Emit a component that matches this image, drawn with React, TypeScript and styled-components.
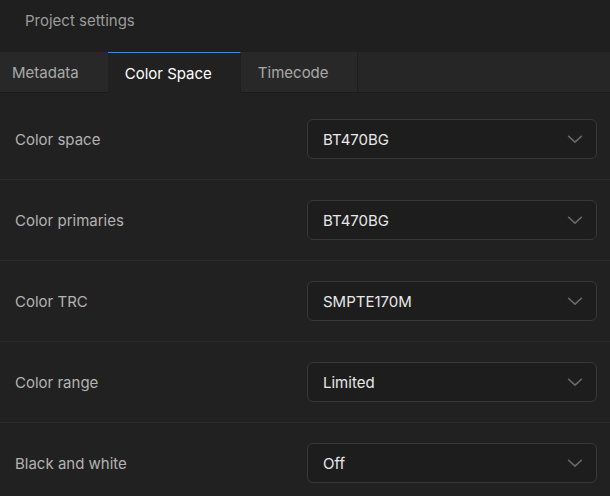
import React from "react";
import styled, { createGlobalStyle } from "styled-components";

const Global = createGlobalStyle`
  html, body { margin: 0; padding: 0; background: #212121; }
  body { font-family: Inter, "Noto Sans", sans-serif; }
  * { box-sizing: border-box; }
`;

const Page = styled.div`
  width: 610px;
  height: 496px;
  overflow: hidden;
  background: #212121;
  display: flex;
  flex-direction: column;
`;

const Header = styled.div`
  height: 52px;
  flex: none;
  background: #1f1f1f;
  display: flex;
  align-items: flex-start;
  padding: 10px 0 0 25px;
  color: #9c9c9c;
  font-size: 15px;
  line-height: 21px;
`;

const TabBar = styled.div`
  height: 41px;
  flex: none;
  display: flex;
  background: #262626;
  border-bottom: 1px solid #1b1b1b;
`;

const Tab = styled.div<{ $active?: boolean; $first?: boolean }>`
  height: ${(p) => (p.$active ? "41px" : "40px")};
  display: flex;
  align-items: center;
  padding: ${(p) => (p.$first ? "0 29px 0 12px" : "0 28px 0 17px")};
  font-size: 15px;
  color: ${(p) => (p.$active ? "#ffffff" : "#a9a9a9")};
  background: ${(p) => (p.$active ? "#212121" : "#282828")};
  border-top: 1px solid ${(p) => (p.$active ? "#4a86d4" : "transparent")};
  border-right: 1px solid #1e1e1e;
  margin-left: ${(p) => (p.$active ? "-1px" : "0")};
  position: relative;
  z-index: ${(p) => (p.$active ? 1 : 0)};
`;

const List = styled.div`
  padding-top: 6px;
  display: flex;
  flex-direction: column;
`;

const Row = styled.div`
  height: 81px;
  flex: none;
  display: flex;
  align-items: center;
  justify-content: space-between;
  padding: 0 13px 0 15px;
  border-bottom: 1px solid #2a2a2a;
`;

const Label = styled.div`
  font-size: 15px;
  color: #b3b3b3;
`;

const Select = styled.div`
  width: 290px;
  height: 40px;
  border: 1px solid #383838;
  border-radius: 6px;
  background: #1d1d1d;
  display: flex;
  align-items: center;
  justify-content: space-between;
  padding: 0 10px 0 15px;
  font-size: 15px;
  color: #e8e8e8;
`;

const Chevron = () => (
  <svg width="22" height="22" viewBox="0 0 24 24" fill="none" stroke="#6a6a6a" strokeWidth="1.8" strokeLinecap="round" strokeLinejoin="round">
    <path d="M5 9l7 6.5 7-6.5" />
  </svg>
);

const rows = [
  ["Color space", "BT470BG"],
  ["Color primaries", "BT470BG"],
  ["Color TRC", "SMPTE170M"],
  ["Color range", "Limited"],
  ["Black and white", "Off"],
];

export default function App() {
  return (
    <Page>
      <Global />
      <Header>Project settings</Header>
      <TabBar>
        <Tab $first>Metadata</Tab>
        <Tab $active>Color Space</Tab>
        <Tab>Timecode</Tab>
      </TabBar>
      <List>
        {rows.map(([l, v]) => (
          <Row key={l}>
            <Label>{l}</Label>
            <Select>
              <span>{v}</span>
              <Chevron />
            </Select>
          </Row>
        ))}
      </List>
    </Page>
  );
}
